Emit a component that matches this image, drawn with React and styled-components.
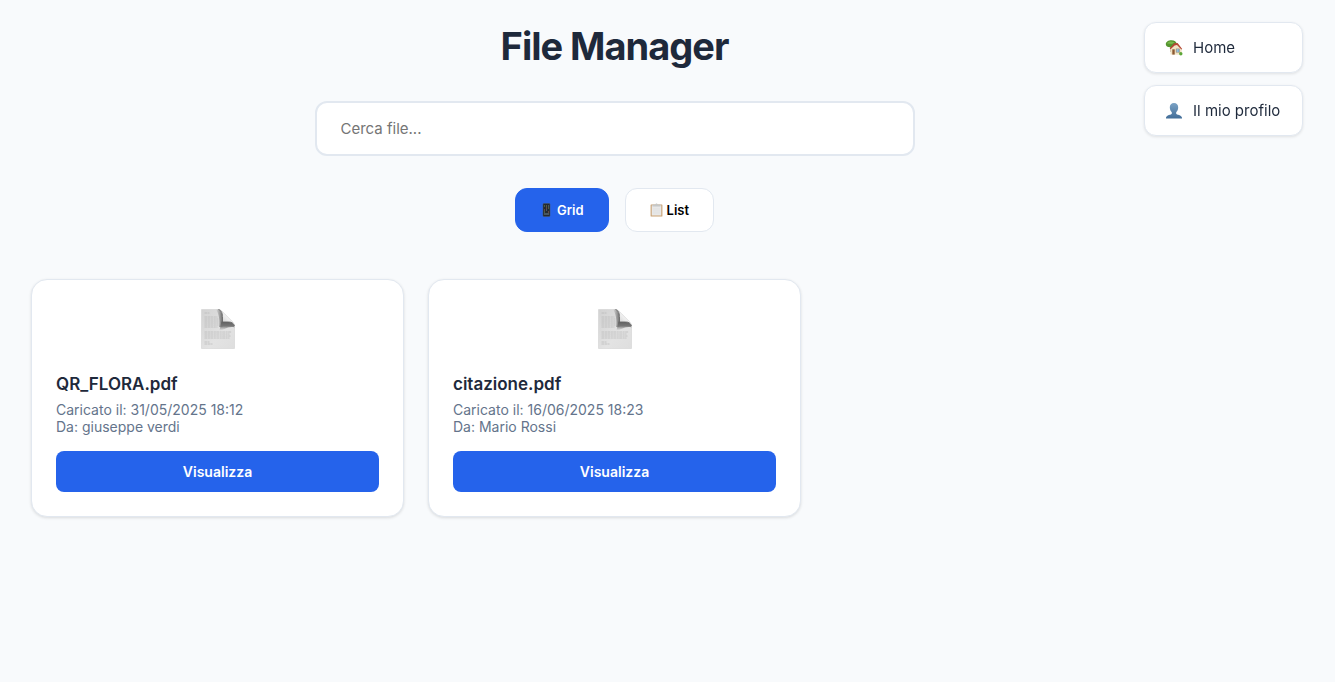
import React, { useState } from "react";
import styled, { createGlobalStyle, css } from "styled-components";

const GlobalStyle = createGlobalStyle`
  *, *::before, *::after { box-sizing: border-box; }
  body {
    margin: 0;
    background: #f8fafc;
    color: #1e293b;
    font-family: Inter, "Liberation Sans", sans-serif;
  }
  button, input { font-family: inherit; }
`;

const Page = styled.main`
  min-height: 100vh;
  padding: 23px 137px 32px 31px;
`;

const Title = styled.h1`
  margin: 0 0 31px;
  font-size: 38px;
  line-height: 47px;
  font-weight: 700;
  letter-spacing: -1px;
  text-align: center;
`;

const SearchInput = styled.input`
  display: block;
  width: 100%;
  max-width: 600px;
  height: 55px;
  margin: 0 auto 32px;
  padding: 0 24px;
  border: 2px solid #e2e8f0;
  border-radius: 12px;
  background: #fff;
  color: #1e293b;
  font-size: 15px;
  &::placeholder { color: #757575; opacity: 1; }
`;

const ViewToggle = styled.div`
  display: flex;
  justify-content: center;
  gap: 16px;
  margin-bottom: 47px;
`;

const ToggleButton = styled.button`
  display: flex;
  align-items: center;
  gap: 4px;
  height: 44px;
  padding: 0 24px;
  border: 1px solid #e2e8f0;
  border-radius: 12px;
  background: #fff;
  color: #000;
  font-size: 13px;
  font-weight: 600;
  cursor: pointer;
  ${({ $active }) => $active && css`
    border-color: #2563eb;
    background: #2563eb;
    color: #fff;
  `}
`;

const FileGrid = styled.div`
  display: grid;
  grid-template-columns: repeat(auto-fill, minmax(300px, 1fr));
  gap: 24px;
`;

const Card = styled.article`
  display: flex;
  flex-direction: column;
  padding: 24px;
  border: 1px solid #e2e8f0;
  border-radius: 16px;
  background: #fff;
  box-shadow: 0 1px 3px rgba(0, 0, 0, 0.12);
`;

const CardIcon = styled.div`
  display: flex;
  justify-content: center;
  padding: 4px 0 24px;
`;

const FileName = styled.h2`
  margin: 0 0 7px;
  font-size: 17px;
  line-height: 20px;
  font-weight: 600;
`;

const Meta = styled.p`
  margin: 0 0 16px;
  color: #64748b;
  font-size: 14px;
  line-height: 17px;
`;

const ViewButton = styled.button`
  height: 41px;
  border: 0;
  border-radius: 8px;
  background: #2563eb;
  color: #fff;
  font-size: 14px;
  font-weight: 600;
  cursor: pointer;
`;

const SideNav = styled.nav`
  position: fixed;
  top: 22px;
  right: 32px;
  display: flex;
  flex-direction: column;
  gap: 12px;
  min-width: 159px;
`;

const NavLink = styled.a`
  display: flex;
  align-items: center;
  gap: 10px;
  height: 51px;
  padding: 0 20px;
  border: 1px solid #e2e8f0;
  border-radius: 12px;
  background: #fff;
  color: #1e293b;
  font-size: 15px;
  text-decoration: none;
  box-shadow: 0 1px 3px rgba(0, 0, 0, 0.1);
`;

const HomeIcon = () => (
  <svg width="18" height="18" viewBox="0 0 18 18" aria-hidden="true">
    <path d="M5.500 7h1.500v6H5.500z" fill="#805a39" />
    <path d="M.8 5.300C.8 2.800 3.500 1.300 6.500 1.300c3 0 5 1.500 5.300 4C11 8 8.500 8.500 6 8.200 3 8.500.8 7.400.8 5.300Z" fill="#55952f" />
    <path d="M2 4.500C3.500 2 7 2 9.500 3.500L7 5Z" fill="#79b94c" />
    <path d="M5.500 9.500 9.500 5.500l3.500-.5 3.700 5v5.800L5.500 15.600Z" fill="#f0e3c4" />
    <path d="m4.700 9.300 4.500-5 3.400-.3 4.600 6-.8.6-4.400-4.600-2.400.4-4 3.900Z" fill="#b44735" />
    <path d="M7.300 10.300h2.400v5.300H7.300z" fill="#8c5934" />
    <path d="M11.200 9.800h3.300v3.600h-3.300z" fill="#6aa9d0" stroke="#b98a63" strokeWidth=".5" />
    <path d="M12.800 9.800v3.600" stroke="#d9ebf5" strokeWidth=".5" />
    <circle cx="15.800" cy="14.800" r="1.700" fill="#5ca638" />
  </svg>
);

const ProfileIcon = () => (
  <svg width="18" height="18" viewBox="0 0 18 18" aria-hidden="true">
    <defs>
      <linearGradient id="person" x1="0" y1="0" x2="0" y2="1">
        <stop offset="0" stopColor="#7ba3c5" />
        <stop offset="1" stopColor="#426d98" />
      </linearGradient>
    </defs>
    <path d="M9 1c2.600 0 4.200 1.700 4.200 4.300 0 2.200-.8 4-2 5v1.400c0 1 5.800 1.200 5.800 4.100v.7H1v-.7c0-2.900 5.800-3.100 5.800-4.100v-1.400c-1.200-1-2-2.800-2-5C4.800 2.700 6.400 1 9 1Z" fill="url(#person)" />
  </svg>
);

const PhoneIcon = () => (
  <svg width="13" height="14" viewBox="0 0 13 14" aria-hidden="true">
    <rect x="3" y=".5" width="7" height="13" rx="1" fill="#252a30" stroke="#4a555f" strokeWidth=".5" />
    <path d="M4 3h1M6 3h1M8 5h1M4 9h1" stroke="#78945b" />
    <path d="M6 5h1M4 7h1M8 9h1" stroke="#a56555" />
    <path d="M8 3h1M6 7h1M4 11h5" stroke="#6c8490" />
  </svg>
);

const ClipboardIcon = () => (
  <svg width="13" height="14" viewBox="0 0 13 14" aria-hidden="true">
    <rect x=".6" y="1.500" width="11.800" height="12" rx=".6" fill="#c9a173" />
    <path d="M1.700 2.300h9.600v10.200H1.700z" fill="#e8e8e8" />
    <path d="M3 6h7M3 8h7M3 10h7" stroke="#dadcdc" strokeWidth=".6" />
    <path d="M2.500 1.600h2.700L6 .6h1l.8 1h2.700v2h-8z" fill="#c6c8c8" />
  </svg>
);

const DocumentIcon = () => (
  <svg width="36" height="42" viewBox="0 0 36 42" aria-hidden="true">
    <defs>
      <linearGradient id="paper" x1="0" y1="0" x2="1" y2="1">
        <stop offset="0" stopColor="#d2d2d2" />
        <stop offset=".6" stopColor="#e3e3e3" />
        <stop offset="1" stopColor="#dedede" />
      </linearGradient>
      <linearGradient id="sideShade" x1="0" y1="0" x2="1" y2="0">
        <stop offset="0" stopColor="#777" stopOpacity="0" />
        <stop offset="1" stopColor="#707070" />
      </linearGradient>
      <linearGradient id="underShade" x1="0" y1="0" x2="0" y2="1">
        <stop offset="0" stopColor="#606060" />
        <stop offset=".5" stopColor="#777" />
        <stop offset="1" stopColor="#aaa" stopOpacity="0" />
      </linearGradient>
      <linearGradient id="curl" x1="0" y1="1" x2="1" y2="0">
        <stop offset="0" stopColor="#bbb" />
        <stop offset=".5" stopColor="#eee" />
        <stop offset="1" stopColor="#ddd" />
      </linearGradient>
    </defs>
    <path d="M1.500 1.500h17c2.500 0 4 2 6 4l6 6c2.500 2.500 4 4 4 6.500v22.500h-33Z" fill="url(#paper)" stroke="#ccc" strokeWidth=".5" />
    <path d="M4.500 5h5M4.500 9h13M4.500 11h14M4.500 13h14M4.500 15h14M4.500 17h14M4.500 19h13M4.500 24h27M4.500 26h25M4.500 28h26M4.500 30h25M4.500 34h5M4.500 36h8" stroke="#b7b7b7" strokeWidth=".7" strokeDasharray="3 .5 2 .4" />
    <path d="M16 1.500h2.500c3 .5 4 4 4 9V19H19c1-6 0-13-3-17.500Z" fill="url(#sideShade)" />
    <path d="M21.500 13.500h8c3 0 4.500 2 5 6-3-1-7 0-10 1.500-2 1-4 2-5 1.500Z" fill="url(#underShade)" />
    <path d="M18.500 1.500c2.500 0 4 2 6 4l6 6c2 2 4 4 4 6.500-1-3-3-4-6-4h-6V10c0-4-.5-7.500-4-8.500Z" fill="url(#curl)" />
    <path d="M18.500 1.500c3.500 1 4 4.500 4 8.500v4h6c3 0 5 1 6 4" fill="none" stroke="#666" strokeWidth=".9" />
  </svg>
);

const files = [
  { name: "QR_FLORA.pdf", uploaded: "31/05/2025 18:12", owner: "giuseppe verdi" },
  { name: "citazione.pdf", uploaded: "16/06/2025 18:23", owner: "Mario Rossi" },
];

export default function App() {
  const [view, setView] = useState("grid");
  return (
    <>
      <GlobalStyle />
      <Page>
        <Title>File Manager</Title>
        <SearchInput type="search" placeholder="Cerca file..." aria-label="Cerca file" />
        <ViewToggle>
          <ToggleButton type="button" $active={view === "grid"} onClick={() => setView("grid")}>
            <PhoneIcon />Grid
          </ToggleButton>
          <ToggleButton type="button" $active={view === "list"} onClick={() => setView("list")}>
            <ClipboardIcon />List
          </ToggleButton>
        </ViewToggle>
        <FileGrid>
          {files.map((file) => (
            <Card key={file.name}>
              <CardIcon><DocumentIcon /></CardIcon>
              <FileName>{file.name}</FileName>
              <Meta>
                Caricato il: {file.uploaded}<br />
                Da: {file.owner}
              </Meta>
              <ViewButton type="button">Visualizza</ViewButton>
            </Card>
          ))}
        </FileGrid>
      </Page>
      <SideNav>
        <NavLink href="#home"><HomeIcon />Home</NavLink>
        <NavLink href="#profilo"><ProfileIcon />Il mio profilo</NavLink>
      </SideNav>
    </>
  );
}
